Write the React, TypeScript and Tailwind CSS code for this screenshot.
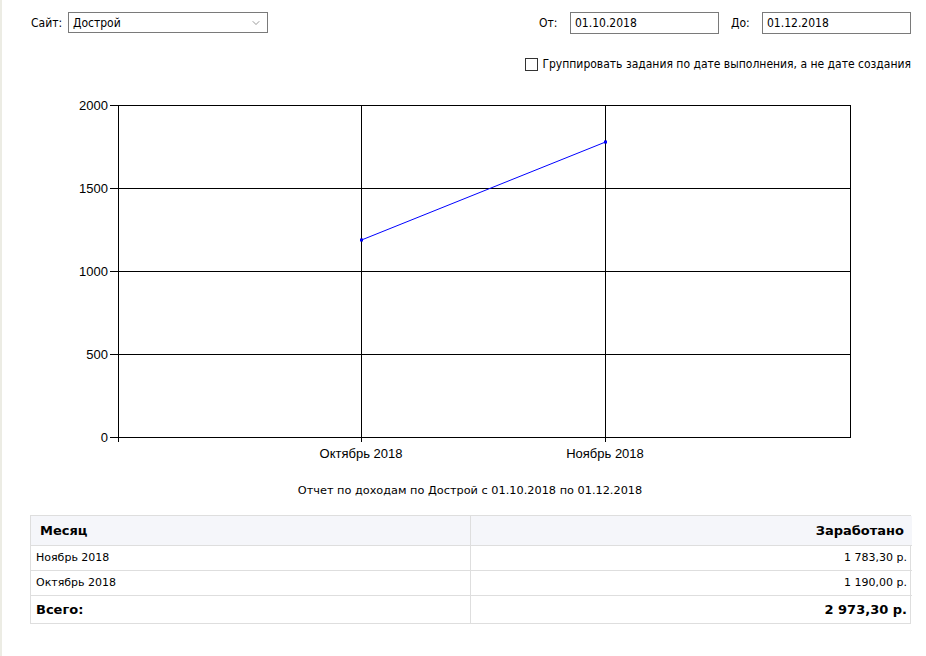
import { ChevronDown } from 'lucide-react'

const rows = [
  { month: 'Ноябрь 2018', sum: '1 783,30 р.' },
  { month: 'Октябрь 2018', sum: '1 190,00 р.' },
]

// chart svg sits at page y=88, after the 2px left border
const OX = 2
const OY = 88
const yTicks = [
  { v: '2000', y: 105 },
  { v: '1500', y: 188 },
  { v: '1000', y: 271 },
  { v: '500', y: 354 },
  { v: '0', y: 437 },
]

function Chart() {
  return (
    <svg width="924" height="380" className="block" style={{ fontFamily: '"Liberation Sans", Arial, sans-serif' }}>
      <g transform={`translate(${-OX},${-OY})`} shapeRendering="crispEdges">
        <rect x="118.5" y="105.5" width="732" height="332" fill="none" stroke="#000" />
        {yTicks.map((t) => (
          <g key={t.v}>
            <line x1="110" x2="851" y1={t.y + 0.5} y2={t.y + 0.5} stroke="#000" />
            <text x="108" y={t.y + 5} fontSize="13" textAnchor="end" fill="#000">
              {t.v}
            </text>
          </g>
        ))}
        <line x1="118.5" x2="118.5" y1="437" y2="442" stroke="#000" />
        <line x1="361.5" x2="361.5" y1="105" y2="442" stroke="#000" />
        <line x1="605.5" x2="605.5" y1="105" y2="442" stroke="#000" />
        <text x="361" y="458" fontSize="13" textAnchor="middle" fill="#000">
          Октябрь 2018
        </text>
        <text x="605" y="458" fontSize="13" textAnchor="middle" fill="#000">
          Ноябрь 2018
        </text>
      </g>
      <g transform={`translate(${-OX},${-OY})`}>
        <line x1="361.5" y1="240" x2="605.5" y2="142" stroke="#0000ff" strokeWidth="1" />
        <rect x="360" y="238.5" width="3" height="3" fill="#0000ff" />
        <rect x="604" y="140.5" width="3" height="3" fill="#0000ff" />
      </g>
    </svg>
  )
}

const condensed = { fontFamily: '"DejaVu Sans Condensed", "DejaVu Sans", Tahoma, sans-serif', fontStretch: 'condensed' as const }

export default function App() {
  return (
    <div
      className="min-h-[656px] bg-white border-l-2 border-[#ecece4] text-black text-[11px]"
      style={{ fontFamily: '"DejaVu Sans", Tahoma, sans-serif' }}
    >
      <div className="flex items-center justify-between pt-3 pl-[29px] pr-[15px] h-[33px] text-[12px]" style={condensed}>
        <div className="flex items-center">
          <span className="w-[37px]">Сайт:</span>
          <div className="flex items-center justify-between w-[200px] h-[21px] border border-[#7a7a7a] pl-1 pr-[5px]">
            <span>Дострой</span>
            <ChevronDown size={12} strokeWidth={1.2} className="text-[#555]" />
          </div>
        </div>
        <div className="flex items-center">
          <span className="w-[31px]">От:</span>
          <div className="w-[149px] h-[22px] border border-[#7a7a7a] flex items-center pl-1">01.10.2018</div>
          <span className="w-[43px] pl-[12px]">До:</span>
          <div className="w-[149px] h-[22px] border border-[#7a7a7a] flex items-center pl-1">01.12.2018</div>
        </div>
      </div>
      <div className="flex justify-end items-center pr-[15px] mt-[23px] h-[16px] gap-[4px] text-[12px]" style={condensed}>
        <span className="w-[13px] h-[13px] border border-[#333] bg-white" />
        <span>Группировать задания по дате выполнения, а не дате создания</span>
      </div>
      <div className="mt-[16px]">
        <Chart />
      </div>
      <div className="text-center mt-[15px] pl-[14px] pr-[2px] text-[11.3px]">
        Отчет по доходам по Дострой с 01.10.2018 по 01.12.2018
      </div>
      <div className="mt-[15px] ml-[28px] w-[881px]">
        <div className="grid grid-cols-[440px_441px] border border-[#dedede]">
          <div className="h-[30px] bg-[#f5f6fa] border-r border-b border-[#dedede] flex items-center pl-[9px] font-bold text-[13px]">
            Месяц
          </div>
          <div className="h-[30px] bg-[#f5f6fa] border-b border-[#dedede] flex items-center justify-end pr-[8px] font-bold text-[13px]">
            Заработано
          </div>
          {rows.map((r) => (
            <div key={r.month} className="contents">
              <div className="h-[25px] border-r border-b border-[#dedede] flex items-center pl-[5px]">{r.month}</div>
              <div className="h-[25px] border-b border-[#dedede] flex items-center justify-end pr-[5px]">{r.sum}</div>
            </div>
          ))}
          <div className="h-[27px] border-r border-[#dedede] flex items-center pl-[5px] font-bold text-[13px]">Всего:</div>
          <div className="h-[27px] flex items-center justify-end pr-[5px] font-bold text-[13px]">2 973,30 р.</div>
        </div>
      </div>
    </div>
  )
}
